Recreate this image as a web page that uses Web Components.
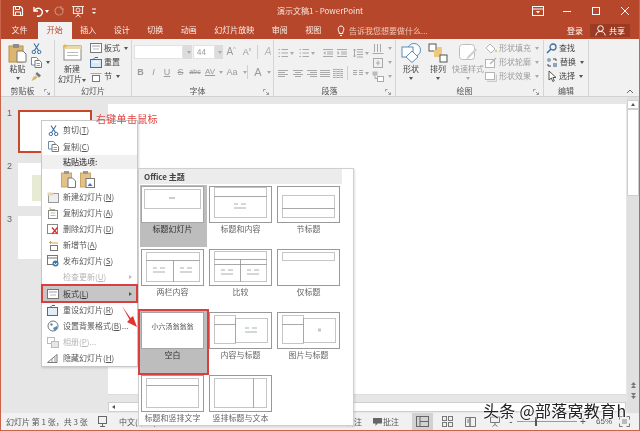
<!DOCTYPE html>
<html lang="zh">
<head>
<meta charset="utf-8">
<title>PowerPoint</title>
<style>
html, body { margin: 0; padding: 0; background: #fff; }
body { font: 8px/10px "Noto Sans CJK SC", "Liberation Sans", sans-serif; color: #444; }
</style>
</head>
<body>
<ppt-window></ppt-window>
<script>
// ── icons ─────────────────────────────────────────────
const svg = (w, h, inner, vb) =>
    `<svg width="${w}" height="${h}" viewBox="${vb || `0 0 ${w} ${h}`}" fill="none" style="display:block;flex:none">${inner}</svg>`;

const lines = (ys, x1, x2, c) => ys.map(y => `<path d="M${x1} ${y}H${x2}" stroke="${c}"/>`).join('');
const G = '#a9a9a9';

const ICONS = {
    save: svg(12, 12, `<path d="M1.5 1.5h7l2 2v7h-9z" stroke="#fff" stroke-width="1.2"/><path d="M3.5 1.5v3h4v-3M3.5 10.5v-3.5h5v3.5" stroke="#fff"/>`),
    undo: svg(12, 12, `<path d="M3 2v4h4" stroke="#fff" stroke-width="1.4"/><path d="M3.5 6a4 4 0 1 1 2.5 5" stroke="#fff" stroke-width="1.4"/>`),
    redo: svg(12, 12, `<circle cx="6" cy="6" r="4" stroke="#cf8a72" stroke-width="1.2"/><path d="M8 1v3h3" stroke="#cf8a72"/>`),
    present: svg(14, 13, `<path d="M1 1.5h12M2.5 1.5v7h9v-7" stroke="#f5e4dc" stroke-width="1.2"/><path d="M7 8.5v2M4.5 12l2.500-2 2.500 2" stroke="#f5e4dc"/><circle cx="7" cy="5" r="2" stroke="#f5e4dc"/>`),
    custom: svg(6, 8, `<path d="M1 2h4" stroke="#fff"/><path d="M1 5l2 2 2-2z" fill="#fff"/>`),
    ropt: svg(12, 10, `<rect x=".5" y=".5" width="11" height="9" stroke="#fff"/><path d="M.5 3h11" stroke="#fff"/><path d="M4 5h4L6 7.500z" fill="#fff"/>`),
    min: svg(10, 10, `<path d="M1 5.500h8" stroke="#fff"/>`),
    max: svg(10, 10, `<rect x="1.500" y="1.500" width="7" height="7" stroke="#fff"/>`),
    close: svg(10, 10, `<path d="M1 1l8 8M9 1l-8 8" stroke="#fff"/>`),
    bulb: svg(8, 11, `<path d="M2.200 7C.5 5 1 1 4 1s3.500 4 1.800 6v1.500H2.200z" stroke="#fff"/><path d="M3 10.500h2" stroke="#fff"/>`),
    user: svg(11, 11, `<circle cx="5.500" cy="3.500" r="2.800" stroke="#fff"/><path d="M.8 10.500c.5-3 2-4 4.700-4s4.200 1 4.700 4" stroke="#fff"/>`),

    paste: svg(20, 20, `<rect x="1" y="3" width="14" height="16" fill="#dcb66f" stroke="#b98f45"/><rect x="5" y="1" width="6" height="4" fill="#8d8d8d"/><path d="M9 8h6l3 3v8H9z" fill="#fff" stroke="#777"/>`),
    cut: svg(11, 11, `<path d="M3 .5l4.500 7M8 .5L3.500 7.500" stroke="#3d6f9f" stroke-width="1.100"/><circle cx="2.800" cy="9" r="1.700" stroke="#3d6f9f"/><circle cx="8.200" cy="9" r="1.700" stroke="#3d6f9f"/>`),
    copy: svg(11, 11, `<path d="M.5.5h5l1.500 1.500v6h-6.500z" fill="#fff" stroke="#6c8daa"/><path d="M4 3.500h4.500l2 2v5h-6.500z" fill="#fff" stroke="#777"/>${lines([6.5, 8.5], 5.5, 9, '#7aa0c0')}`),
    brush: svg(11, 11, `<path d="M6 1l4 3.500-2 2L4.500 3z" fill="#777"/><path d="M4.500 4.500L2 6.500l-1.500 3.500 4.500-2 1.500-2z" fill="#dcb66f"/>`),
    slide: svg(20, 18, `<rect x="2" y="3" width="17" height="14" fill="#fff" stroke="#888"/><rect x="2" y="3" width="17" height="3" fill="#e9d9a8"/>${lines([9.5, 12.5], 5, 16, '#bbb')}<path d="M3 .5l1 2 2 .5-2 .8-1 2-.8-2-2-.8 2-.5z" fill="#e5b64a"/>`),
    layout: svg(12, 10, `<rect x=".5" y=".5" width="11" height="9" fill="#fff" stroke="#777"/>${lines([3], 2, 10, '#99b')}${lines([6], 3, 9, '#bbb')}`),
    reset: svg(12, 11, `<rect x=".5" y="2.500" width="11" height="8" fill="#dbe8f3" stroke="#3d6f9f"/><path d="M3 2.500l2-2h3" stroke="#3d6f9f"/><path d="M3 5h6" stroke="#fff"/>`),
    section: svg(12, 11, `<path d="M.5 2.500h11" stroke="#dc9f4b"/><rect x="2.500" y="4.500" width="7" height="6" fill="#fff" stroke="#777"/>`),

    bullets: svg(10, 10, lines([1.500, 5, 8.500], 3.500, 10, G) + `<path d="M.5 1.500h1.500M.5 5h1.500M.5 8.500h1.500" stroke="${G}"/>`),
    indentL: svg(10, 10, lines([1.500, 8.500], 0, 10, G) + lines([4, 6], 4, 10, G) + `<path d="M2.500 3L.5 5l2 2z" fill="${G}"/>`),
    indentR: svg(10, 10, lines([1.500, 8.500], 0, 10, G) + lines([4, 6], 4, 10, G) + `<path d="M.5 3l2 2-2 2z" fill="${G}"/>`),
    spacing: svg(10, 10, lines([1.500, 4, 6.500, 9], 4, 10, G) + `<path d="M1.500 1v8M.2 2.500l1.300-1.500 1.300 1.500M.2 7.500l1.300 1.500 1.300-1.500" stroke="${G}"/>`),
    alignL: svg(10, 10, lines([2.500, 6.500], 0, 10, G) + lines([4.500, 8.500], 0, 7, G)),
    alignC: svg(10, 10, lines([2.500, 6.500], 0, 10, G) + lines([4.500, 8.500], 2, 8, G)),
    alignR: svg(10, 10, lines([2.500, 6.500], 0, 10, G) + lines([4.500, 8.500], 3, 10, G)),
    justify: svg(10, 10, lines([2.500, 4.500, 6.500, 8.500], 0, 10, G)),
    dist: svg(10, 10, lines([1.500, 3.500, 5.500, 7.500, 9.500], 0, 10, G) + `<path d="M3 0v10M7 0v10" stroke="#ddd"/>`),
    cols: svg(10, 10, lines([2.500, 4.500, 6.500], 0, 4, G) + lines([2.500, 4.500, 6.500], 6, 10, G)),
    dir: svg(12, 11, `<path d="M2.500 1v8M5.500 1v8M8.500 1v8" stroke="${G}"/><path d="M.5 10.500h11" stroke="#8fb1cc"/>`),
    valign: svg(12, 11, `<rect x="1.500" y="1.500" width="9" height="9" stroke="${G}"/><path d="M4 6h4M6 3.500v5" stroke="${G}"/>`),
    smart: svg(12, 11, `<rect x=".5" y=".5" width="5" height="4" fill="#bbb"/><rect x="5.500" y="5.500" width="6" height="5" fill="#fff" stroke="${G}"/><path d="M3 4.500v3h2.500" stroke="${G}"/>`),

    shapes: svg(20, 20, `<circle cx="13" cy="7" r="6.500" fill="#fff" stroke="#5a8cb6"/><rect x="1" y="4" width="11" height="10" fill="#fff" stroke="#5a8cb6"/><path d="M11 8l6 6-6 5.500-6-5.500z" fill="#fff" stroke="#5a8cb6"/>`),
    arrange: svg(20, 20, `<rect x="1" y="1" width="7" height="7" fill="#fff" stroke="#555"/><rect x="6" y="7" width="8" height="7" fill="#edc97e"/><rect x="9" y="4" width="5" height="5" fill="#edc97e"/><rect x="12" y="12" width="7" height="7" fill="#fff" stroke="#555"/>`),
    quick: svg(20, 20, `<rect x="1.500" y="1.500" width="15" height="15" rx="3" fill="#fff" stroke="#bdbdbd"/><path d="M19 7l-8 8-3 2 1.500-3.500 8-8z" fill="#d0d0d0"/>`),
    fill: svg(12, 11, `<path d="M5 1l5 5-4 4-5-5z" fill="#fff" stroke="#b5b5b5"/><path d="M11 7v2" stroke="#e0c68f" stroke-width="2"/>`),
    outline: svg(12, 11, `<rect x=".5" y="2.500" width="9" height="8" fill="#fff" stroke="#b5b5b5"/><path d="M11 1L5 7" stroke="#b5b5b5" stroke-width="1.400"/>`),
    effect: svg(12, 11, `<rect x=".5" y="1.500" width="9" height="7" fill="#fff" stroke="#b5b5b5"/><path d="M2 10.500h9.500v-7" stroke="#ccc" stroke-width="1.400"/>`),
    find: svg(11, 11, `<circle cx="7" cy="4" r="3" stroke="#3d6f9f" stroke-width="1.300"/><path d="M5 6l-4 4" stroke="#3d6f9f" stroke-width="1.600"/>`),
    replace: svg(12, 11, `<circle cx="3" cy="3" r="2" fill="#8aa5bd"/><rect x="7" y="6" width="4" height="4" fill="#8aa5bd"/><path d="M7 2h3v2M5 9H2V7" stroke="#444"/>`),
    select: svg(11, 12, `<path d="M3 1v9l2.300-2 1.500 3.500 1.500-.7L6.800 7.500H10z" fill="#fff" stroke="#555"/>`),
    launch: svg(6, 6, `<path d="M.5 2.500V.5h2M3 3l2.500 2.500M5.500 3.500v2h-2" stroke="#999"/>`),

    mNew: svg(12, 11, `<rect x="1.500" y="1.500" width="10" height="9" fill="#eee" stroke="#999"/><rect x=".5" y=".5" width="6" height="3" fill="#e2d5b0"/>`),
    mDup: svg(12, 12, `<path d="M3 .5v2h5" stroke="#dc9f4b"/><rect x="1.500" y="3.500" width="9" height="8" fill="#fff" stroke="#888"/>${lines([6, 8.500], 3.500, 8.500, '#bbb')}`),
    mDel: svg(12, 11, `<rect x=".5" y=".5" width="10" height="9" fill="#fff" stroke="#888"/><path d="M5 3.500l5.500 6.500M10.500 3.500L5 10" stroke="#d33" stroke-width="1.400"/>`),
    mSec: svg(12, 11, `<path d="M3.500 1v3M2 2.500h3" stroke="#dc9f4b"/><path d="M5 3h6" stroke="#dc9f4b"/><rect x="3.500" y="5.500" width="7" height="5" fill="#fff" stroke="#777"/>`),
    mPub: svg(12, 12, `<rect x=".5" y=".5" width="10" height="9" fill="#fff" stroke="#777"/><path d="M.5 3h10" stroke="#777"/><circle cx="8.500" cy="8.500" r="3" fill="#3d78ad"/><path d="M7 8l1.500 2 1.500-2" stroke="#fff"/>`),
    mReset: svg(12, 11, `<rect x=".5" y="2.500" width="10" height="8" fill="#e3edf5" stroke="#3d6f9f"/><path d="M3 2.500l2-2h3" stroke="#3d6f9f"/>`),
    mBg: svg(12, 12, `<circle cx="6" cy="6" r="5" fill="#fff" stroke="#777"/><circle cx="4.500" cy="4.500" r="1.200" fill="#5a8cb6"/><path d="M6 8l4-2v3.500L7.500 11z" fill="#5a8cb6"/>`),
    mPhoto: svg(12, 11, `<rect x=".5" y=".5" width="7" height="6" fill="#fff" stroke="#bbb"/><rect x="4.500" y="4.500" width="7" height="6" fill="#e6e6e6" stroke="#bbb"/>`),
    mHide: svg(12, 10, `<path d="M.5 9.500L10 1.500V9.500z" fill="#fff" stroke="#777"/><path d="M5 9V6M8 9V4" stroke="#999"/>`),
    pasteA: svg(15, 18, `<rect x=".5" y="3" width="10" height="14" fill="#e3c288" stroke="#c9a767"/><rect x="3" y="1" width="5" height="3" fill="#999"/><path d="M7 8h4.500l3 3v6.500H7z" fill="#fff" stroke="#777"/>`),
    pasteB: svg(15, 18, `<rect x=".5" y="3" width="10" height="14" fill="#e3c288" stroke="#c9a767"/><rect x="3" y="1" width="5" height="3" fill="#999"/><rect x="6" y="8.500" width="8.500" height="9" fill="#fff" stroke="#777"/><path d="M7.500 16l2.500-3 2.500 3z" fill="#3d78ad"/>`),

    notes: svg(11, 11, `<rect x="1.500" y=".5" width="8" height="7" stroke="#666"/><path d="M5.500 7.500v3M3 10.500h5" stroke="#666"/>`),
    comment: svg(9, 8, `<path d="M0 0h9v5.500H4.500L2.500 8V5.500H0z" fill="#666"/>`),
    normal: svg(13, 11, `<rect x=".5" y=".5" width="12" height="10" stroke="#666"/><path d="M4 .5v10M4 5.500h8.500" stroke="#666"/>`),
    sorter: svg(11, 11, `<rect x=".5" y=".5" width="4" height="4" stroke="#777"/><rect x="6.500" y=".5" width="4" height="4" stroke="#777"/><rect x=".5" y="6.500" width="4" height="4" stroke="#777"/><rect x="6.500" y="6.500" width="4" height="4" stroke="#777"/>`),
    reader: svg(11, 11, `<path d="M.5 1.500h4.500v9H.5zM5 1.500h5.500v9H5z" stroke="#777"/><path d="M2 4h2M2 6h2" stroke="#777"/>`),
    show: svg(12, 11, `<path d="M.5 1h11M1.500 1v5.500h9V1" stroke="#777"/><path d="M6 6.500v2M3.500 10.500L6 8.500l2.500 2" stroke="#777"/>`),
    fit: svg(11, 11, `<path d="M.5 3.500v-3h3M7.500.5h3v3M10.500 7.500v3h-3M3.500 10.500h-3v-3" stroke="#777"/><rect x="3" y="3" width="5" height="5" fill="#bbb"/>`),
};

// ── elements ──────────────────────────────────────────
class PptTitlebar extends HTMLElement {
    connectedCallback() {
        this.attachShadow({ mode: 'open' }).innerHTML = `
<style>
:host { display: grid; grid-template-columns: 1fr auto 1fr; align-items: center; height: 22px; background: #b7472a; color: #fff; }
.qat { display: flex; align-items: center; padding-left: 11px; }
.qat span { display: block; }
.caret { width: 0; height: 0; border: 2px solid transparent; border-top: 3px solid #fff; border-bottom: 0; margin: 0 4px 0 2px; }
.title { font-size: 8px; line-height: 10px; color: #f7e6df; }
.ctl { display: flex; justify-content: flex-end; }
.ctl span { width: 29px; display: flex; justify-content: center; }
</style>
<div class="qat">
    <span style="margin-right:7px">${ICONS.save}</span>
    <span>${ICONS.undo}</span><i class="caret"></i>
    <span style="margin-right:6px">${ICONS.redo}</span>
    <span style="margin-right:6px">${ICONS.present}</span>
    <span>${ICONS.custom}</span>
</div>
<div class="title">演示文稿1 - PowerPoint</div>
<div class="ctl"><span>${ICONS.ropt}</span><span>${ICONS.min}</span><span>${ICONS.max}</span><span>${ICONS.close}</span></div>`;
    }
}

class PptTabs extends HTMLElement {
    connectedCallback() {
        const tabs = ['开始', '插入', '设计', '切换', '动画', '幻灯片放映', '审阅', '视图'];
        this.attachShadow({ mode: 'open' }).innerHTML = `
<style>
:host { display: flex; align-items: stretch; height: 17px; background: #b7472a; color: #fff; font-size: 8px; line-height: 16px; }
.tab { padding: 0 8.750px; color: #fbeee9; }
.file { width: 37px; box-sizing: border-box; text-align: center; padding: 0; }
.on { background: #f1f1f1; color: #b7472a; }
.tell { display: flex; align-items: center; gap: 4px; margin-left: 7px; color: #f2c9ba; }
.right { margin-left: auto; display: flex; align-items: center; gap: 7px; padding-right: 9px; }
.share { display: flex; align-items: center; gap: 3px; height: 13px; padding: 0 5px; background: #9b3b23; line-height: 13px; margin-top: -1px; }
</style>
<div class="tab file">文件</div>
${tabs.map((t, i) => `<div class="tab${i === 0 ? ' on' : ''}">${t}</div>`).join('')}
<div class="tell">${ICONS.bulb}<span>告诉我您想要做什么...</span></div>
<div class="right"><span>登录</span><span class="share">${ICONS.user}共享</span></div>`;
    }
}

class RbGroup extends HTMLElement {
    connectedCallback() {
        const launcher = this.hasAttribute('launcher');
        this.attachShadow({ mode: 'open' }).innerHTML = `
<style>
:host { display: flex; flex-direction: column; box-sizing: border-box; height: 56px; flex: none; border-right: 1px solid #d5d5d5; margin-top: 1px; }
.body { flex: 1; display: flex; min-height: 0; }
.foot { display: grid; grid-template-columns: ${launcher ? '1fr 10px' : '1fr'}; height: 10px; line-height: 10px; align-items: center; color: #555; text-align: center; }
.foot svg { margin-top: 2px; }
</style>
<div class="body"><slot></slot></div>
<div class="foot"><span>${this.getAttribute('label')}</span>${launcher ? ICONS.launch : ''}</div>`;
    }
}

class PptRibbon extends HTMLElement {
    connectedCallback() {
        const caret = '<i class="caret"></i>';
        const big = (icon, text, w, extra = '') =>
            `<div class="big ${extra}" style="width:${w}px"><span class="ic">${icon}</span><span>${text}</span>${caret}</div>`;
        const item = (icon, text, c = false) =>
            `<div class="item">${icon}<span>${text}</span>${c ? caret : ''}</div>`;
        const ic = (name, ml, c) =>
            `<span style="margin-left:${ml}px">${ICONS[name]}</span>${c ? caret : ''}`;

        this.attachShadow({ mode: 'open' }).innerHTML = `
<style>
:host { display: flex; height: 58px; background: #f1f1f1; border-bottom: 1px solid #d2d2d2; box-sizing: border-box; font-size: 8px; line-height: 10px; color: #444; position: relative; }
.big { display: flex; flex-direction: column; align-items: center; flex: none; text-align: center; }
.big .ic { height: 20px; margin: 3px 0 1px; }
.big .caret { margin: 3px auto 0; }
.off, .off * { color: #9d9d9d; }
.list { display: flex; flex-direction: column; padding-top: 1px; flex: none; }
.item { display: flex; align-items: center; gap: 2px; height: 14px; }
.off .caret, .caret.off { border-top-color: #aaa; }
.caret { display: block; width: 0; height: 0; border: 2px solid transparent; border-top: 3px solid #555; border-bottom: 0; flex: none; margin-left: 2px; }
.rows { display: flex; flex-direction: column; gap: 6px; padding-top: 5px; }
.row { display: flex; align-items: center; height: 14px; color: #9a9a9a; }
.row .caret { border-top-color: #aaa; }
.box { height: 14px; background: #fff; border: 1px solid #e2e2e2; box-sizing: border-box; line-height: 12px; padding-left: 3px; }
.spin { height: 14px; width: 9px; background: #dcdcdc; display: flex; align-items: center; justify-content: center; }
.t { font-family: "Liberation Sans", sans-serif; text-align: center; flex: none; }
.sep { width: 1px; height: 14px; background: #d0d0d0; }
.chev { position: absolute; right: 5px; bottom: 2px; }
</style>
<rb-group label="剪贴板" launcher style="width:54px">
    <div style="display:flex">
        <div style="margin-left:3px">${big(ICONS.paste, '粘贴', 27)}</div>
        <div class="list">
            ${item(ICONS.cut, '')}
            <div class="item">${ICONS.copy}${caret}</div>
            ${item(ICONS.brush, '')}
        </div>
    </div>
</rb-group>
<rb-group label="幻灯片" style="width:77px">
    <div style="display:flex">
        <div class="big" style="width:32px;margin-left:1px">
            <span class="ic" style="height:18px;margin-bottom:3px">${ICONS.slide}</span>
            <span>新建</span>
            <span style="display:flex;align-items:center;white-space:nowrap">幻灯片${caret}</span>
        </div>
        <div class="list" style="margin-left:2px">
            ${item(ICONS.layout, '板式', true)}
            ${item(ICONS.reset, '重置')}
            ${item(ICONS.section, '节', true)}
        </div>
    </div>
</rb-group>
<rb-group label="字体" launcher style="width:142px">
    <div class="rows" style="padding-left:2px">
        <div class="row">
            <div class="box" style="width:49px"></div><div class="spin">${caret}</div>
            <div class="box" style="width:22px;margin-left:1px">44</div><div class="spin" style="width:8px">${caret}</div>
            <span class="t" style="width:14px;margin-left:1px;font-size:10px">A<sup style="font-size:5px;line-height:0">^</sup></span>
            <span class="t" style="width:14px;margin-left:2px;font-size:9px">A<sup style="font-size:5px;line-height:0">v</sup></span>
            <span class="sep" style="margin-left:3px"></span>
            <span class="t" style="width:14px;margin-left:3px;font-size:10px;font-style:italic;color:#b8b8b8">A</span>
        </div>
        <div class="row">
            <span class="t" style="width:13px;font-weight:700;font-size:9px">B</span>
            <span class="t" style="width:13px;font-style:italic;font-size:9px">I</span>
            <span class="t" style="width:14px;text-decoration:underline;font-size:9px">U</span>
            <span class="t" style="width:13px;text-decoration:line-through;font-size:9px">S</span>
            <span class="t" style="width:16px;text-decoration:line-through;font-size:7px">abc</span>
            <span class="t" style="width:14px;font-size:8px;text-decoration:underline">AV</span>${caret}
            <span class="t" style="width:18px;font-size:9px">Aa</span>${caret}
            <span class="sep" style="margin-left:0"></span>
            <span class="t" style="width:14px;margin-left:3px;font-size:11px">A</span>${caret}
        </div>
    </div>
</rb-group>
<rb-group label="段落" launcher style="width:122px">
    <div class="rows" style="padding-left:4px;width:94px;padding-top:8px;gap:10px">
        <div class="row" style="height:10px">
            ${ic('bullets', 0, 1)}${ic('bullets', 5, 1)}${ic('indentL', 8)}${ic('indentR', 4)}${ic('spacing', 6, 1)}
        </div>
        <div class="row" style="height:10px">
            ${ic('alignL', 0)}${ic('alignC', 5)}${ic('alignR', 4)}${ic('justify', 3)}${ic('dist', 3)}
            <span class="sep" style="margin-left:4px"></span>${ic('cols', 5, 1)}
        </div>
    </div>
    <div class="list off">
        <div class="item">${ICONS.dir}${caret}</div>
        <div class="item">${ICONS.valign}${caret}</div>
        <div class="item">${ICONS.smart}${caret}</div>
    </div>
</rb-group>
<rb-group label="绘图" launcher style="width:148px">
    <div style="display:flex">
        <div style="margin-left:1px">${big(ICONS.shapes, '形状', 28)}</div>
        ${big(ICONS.arrange, '排列', 26)}
        ${big(ICONS.quick, '<span style="white-space:nowrap">快速样式</span>', 34, 'off')}
        <div class="list off">
            ${item(ICONS.fill, '形状填充', true)}
            ${item(ICONS.outline, '形状轮廓', true)}
            ${item(ICONS.effect, '形状效果', true)}
        </div>
    </div>
</rb-group>
<rb-group label="编辑" style="width:45px">
    <div class="list" style="padding-left:2px">
        ${item(ICONS.find, '查找')}
        ${item(ICONS.replace, '替换', true)}
        ${item(ICONS.select, '选择', true)}
    </div>
</rb-group>
<span class="chev">${svg(8, 5, '<path d="M1 4l3-3 3 3" stroke="#666"/>')}</span>`;
    }
}

class SlideThumb extends HTMLElement {
    connectedCallback() {
        const on = this.hasAttribute('active');
        this.attachShadow({ mode: 'open' }).innerHTML = `
<style>
:host { display: flex; height: 43px; padding-left: 6px; gap: 6px; font: 9px/6px "Liberation Sans", sans-serif; color: ${on ? '#b7472a' : '#666'}; }
.n { width: 5px; text-align: right; }
.s { width: 74px; height: 43px; box-sizing: border-box; background: #fff; ${on ? 'border: 2px solid #c8472b;' : ''} padding: 12px 0 0 14px; }
</style>
<div class="n">${this.getAttribute('n')}</div>
<div class="s"><slot></slot></div>`;
    }
}

class PptSlides extends HTMLElement {
    connectedCallback() {
        this.attachShadow({ mode: 'open' }).innerHTML = `
<style>
:host { display: flex; flex-direction: column; gap: 10px; width: 106px; flex: none; padding-top: 13px; box-sizing: border-box; background: #e6e6e6; }
.pic { width: 10px; height: 26px; background: #e8ebd3; }
</style>
<slide-thumb n="1" active></slide-thumb>
<slide-thumb n="2"><div class="pic"></div></slide-thumb>
<slide-thumb n="3"></slide-thumb>`;
    }
}

class PptEditor extends HTMLElement {
    connectedCallback() {
        this.attachShadow({ mode: 'open' }).innerHTML = `
<style>
:host { flex: 1; display: flex; min-width: 0; background: #e6e6e6; }
.main { flex: 1; display: flex; flex-direction: column; padding: 7px 0 1px 1px; }
.canvas { flex: 1; background: #fff; border-bottom: 1px solid #dcdcdc; }
.hbar { height: 10px; margin-top: 7px; background: #fff; border: 1px solid #cfcfcf; box-sizing: border-box; display: flex; align-items: center; padding-left: 3px; }
.tri { width: 0; height: 0; border: 2.500px solid transparent; border-right: 3px solid #555; border-left: 0; }
.v { width: 12px; flex: none; margin-left: 1px; display: flex; flex-direction: column; background: #e0e0e0; }
.up { height: 9px; background: #fff; border: 1px solid #cfcfcf; box-sizing: border-box; display: flex; justify-content: center; align-items: center; margin-top: 3px; }
.up i { width: 0; height: 0; border: 2.500px solid transparent; border-bottom: 3px solid #555; border-top: 0; }
.thumb { height: 87px; background: #fff; border: 1px solid #cfcfcf; box-sizing: border-box; }
.pg { margin-top: auto; padding-bottom: 14px; display: flex; flex-direction: column; align-items: center; gap: 5px; }
</style>
<div class="main">
    <div class="canvas"></div>
    <div class="hbar"><i class="tri"></i></div>
</div>
<div class="v">
    <div class="up"><i></i></div>
    <div class="thumb"></div>
    <div class="pg">${svg(5, 6, '<path d="M2.500 0L5 3H0zM2.500 3L5 6H0z" fill="#777"/>')}${svg(5, 6, '<path d="M0 0h5L2.500 3zM0 3h5L2.500 6z" fill="#777"/>')}</div>
</div>`;
    }
}

class PptStatus extends HTMLElement {
    connectedCallback() {
        this.attachShadow({ mode: 'open' }).innerHTML = `
<style>
:host { display: flex; align-items: center; height: 17px; background: #f1f1f1; font-size: 8px; line-height: 10px; color: #555; padding-left: 5px; }
.view { display: flex; align-items: center; justify-content: center; height: 17px; width: 21px; flex: none; }
.slider { position: relative; width: 60px; height: 1px; background: #999; margin: 0 2px; flex: none; }
.slider i { position: absolute; left: 18px; top: -4px; width: 2px; height: 9px; background: #555; }
.pm { font: 10px/10px "Liberation Sans", sans-serif; width: 8px; text-align: center; flex: none; }
</style>
<span style="width:88px;white-space:nowrap;flex:none">幻灯片 第 1 张，共 3 张</span>
<span style="margin-left:3px">${ICONS.notes}</span>
<span style="margin-left:11px;width:60px;flex:none;white-space:nowrap">中文(中国)</span>
<span style="margin-left:167px;width:22px;flex:none;white-space:nowrap">备注</span>
<span style="margin-left:5px;display:flex;align-items:center;gap:1px;width:39px;flex:none;white-space:nowrap">${ICONS.comment}批注</span>
<span class="view" style="background:#d2d2d2">${ICONS.normal}</span>
<span class="view" style="margin-left:4px">${ICONS.sorter}</span>
<span class="view" style="margin-left:2px">${ICONS.reader}</span>
<span class="view" style="margin-left:3px">${ICONS.show}</span>
<span class="pm" style="margin-left:2px">-</span><span class="slider"><i></i></span><span class="pm">+</span>
<span style="margin-left:9px;font-family:'Liberation Sans',sans-serif;width:20px;flex:none">65%</span>
<span style="margin-left:3px">${ICONS.fit}</span>`;
    }
}

class MenuItem extends HTMLElement {
    connectedCallback() {
        const off = this.hasAttribute('disabled');
        const hl = this.hasAttribute('hl');
        const more = this.hasAttribute('more');
        const h = this.getAttribute('h') || 16;
        this.attachShadow({ mode: 'open' }).innerHTML = `
<style>
:host { display: flex; align-items: center; height: ${h}px; color: ${off ? '#b5b5b5' : hl ? '#333' : '#555'}; ${hl ? 'background:#c6c6c6;outline:2px solid #d8403f;outline-offset:-1px;' : ''} }
.i { width: 21px; flex: none; display: flex; justify-content: center; padding-left: 1px; box-sizing: border-box; }
.m { margin-left: auto; margin-right: 5px; width: 0; height: 0; border: 2.500px solid transparent; border-left: 3px solid ${off ? '#bbb' : '#555'}; border-right: 0; }
::slotted(u) { text-underline-offset: 1px; }
</style>
<span class="i">${ICONS[this.getAttribute('icon')] || ''}</span><span><slot></slot></span>${more ? '<i class="m"></i>' : ''}`;
    }
}

class PptMenu extends HTMLElement {
    connectedCallback() {
        this.attachShadow({ mode: 'open' }).innerHTML = `
<style>
:host { position: absolute; left: 40px; top: 120px; width: 97px; height: 247px; box-sizing: border-box; padding: 1px 0 0; background: #fff; border: 1px solid #c8c8c8; box-shadow: 1px 1px 2px rgba(0,0,0,.15); font-size: 8px; line-height: 10px; white-space: nowrap; }
.head { margin-top: 1px; background: #f0f0f0; height: 14px; line-height: 14px; padding-left: 21px; font-weight: 500; color: #444; margin-left: 0; }
.paste { display: flex; gap: 4px; height: 20px; padding: 1px 0 0 19px; box-sizing: border-box; }
</style>
<menu-item icon="cut">剪切(<u>T</u>)</menu-item>
<menu-item icon="copy" h="17">复制(<u>C</u>)</menu-item>
<div class="head" style="margin-top:0">粘贴选项:</div>
<div class="paste">${ICONS.pasteA}${ICONS.pasteB}</div>
<menu-item icon="mNew">新建幻灯片(<u>N</u>)</menu-item>
<menu-item icon="mDup">复制幻灯片(<u>A</u>)</menu-item>
<menu-item icon="mDel">删除幻灯片(<u>D</u>)</menu-item>
<menu-item icon="mSec">新增节(<u>A</u>)</menu-item>
<menu-item icon="mPub">发布幻灯片(<u>S</u>)</menu-item>
<menu-item disabled more>检查更新(<u>U</u>)</menu-item>
<menu-item icon="layout" hl more h="17">板式(<u>L</u>)</menu-item>
<menu-item icon="mReset">重设幻灯片(<u>R</u>)</menu-item>
<menu-item icon="mBg">设置背景格式(<u>B</u>)...</menu-item>
<menu-item icon="mPhoto" disabled>相册(<u>P</u>)...</menu-item>
<menu-item icon="mHide">隐藏幻灯片(<u>H</u>)</menu-item>`;
    }
}

const dotted = (x1, y1, x2, y2) =>
    `<rect x="${x1 + .5}" y="${y1 + .5}" width="${x2 - x1}" height="${y2 - y1}" stroke="#8a8a8a" stroke-dasharray="1 1"/>`;
const holder = (cx, cy) =>
    `<path d="M${cx - 6} ${cy - 2}h4M${cx - 6} ${cy + 2}h12M${cx + 1} ${cy - 2}h5" stroke="#c4cbce" stroke-width="1.500"/>`;

const LAYOUTS = {
    title: dotted(3, 3, 59, 22) + `<path d="M28 12h6" stroke="#ccc" stroke-width="2"/>`,
    content: dotted(5, 1, 57, 10) + dotted(5, 10, 57, 31) + holder(31, 20),
    section: dotted(5, 9, 57, 22) + dotted(5, 22, 57, 31),
    two: dotted(5, 3, 58, 11) + dotted(5, 11, 32, 32) + dotted(32, 11, 58, 32) + holder(18, 21) + holder(45, 21),
    compare: dotted(5, 2, 57, 10) + dotted(5, 10, 31, 15) + dotted(31, 10, 57, 15) + dotted(5, 15, 31, 32) + dotted(31, 15, 57, 32) + holder(18, 23) + holder(44, 23),
    only: dotted(5, 3, 57, 11),
    blank: '',
    capContent: dotted(5, 3, 26, 12) + dotted(5, 12, 26, 31) + dotted(26, 6, 58, 30) + holder(42, 18),
    capPic: dotted(5, 3, 26, 12) + dotted(5, 12, 26, 31) + dotted(26, 6, 58, 30) + `<path d="M41 18h3" stroke="#c5c5c5" stroke-width="3"/>`,
    vText: dotted(5, 3, 57, 10) + dotted(5, 10, 57, 32),
    vTitle: dotted(5, 3, 44, 32) + dotted(44, 3, 57, 32),
};

class LayoutCell extends HTMLElement {
    connectedCallback() {
        const on = this.hasAttribute('selected');
        const boxed = this.hasAttribute('boxed');
        const scrib = this.getAttribute('scribble');
        this.attachShadow({ mode: 'open' }).innerHTML = `
<style>
:host { display: block; width: 67px; height: 62px; box-sizing: border-box; padding: 1px 0 0 1px; text-align: center; ${on ? 'background: #bdbdbd;' : ''} ${boxed ? 'outline: 2px solid #d8403f; outline-offset: 0;' : ''} color: ${on ? '#333' : '#666'}; position: relative; }
.t { width: 63px; height: 37px; background: #fff; border: 1px solid ${on ? '#a5a5a5' : '#999'}; box-sizing: border-box; position: relative; display: flex; align-items: center; justify-content: center; font-size: 7px; color: #555; overflow: hidden; white-space: nowrap; }
.t svg { position: absolute; left: -1px; top: -1px; }
.l { width: 63px; line-height: 10px; margin-top: 1px; white-space: nowrap; }
</style>
<div class="t">${svg(63, 37, LAYOUTS[this.getAttribute('type')])}${scrib ? `<span style="margin-top:-9px">${scrib}</span>` : ''}</div>
<div class="l"><slot></slot></div>`;
    }
}

class LayoutGallery extends HTMLElement {
    connectedCallback() {
        this.attachShadow({ mode: 'open' }).innerHTML = `
<style>
:host { position: absolute; left: 137px; top: 168px; width: 216px; height: 258px; box-sizing: border-box; background: #fff; border: 1px solid #cfcfcf; box-shadow: 1px 1px 2px rgba(0,0,0,.12); padding-right: 11px; font-size: 8px; line-height: 10px; }
.head { height: 15px; line-height: 15px; background: #ececec; padding-left: 5px; font-weight: 700; color: #444; font-size: 8px; }
.grid { display: grid; grid-template-columns: repeat(3, 68px); grid-auto-rows: 63px; padding: 1px 0 0 1px; }
</style>
<div class="head">Office 主题</div>
<div class="grid">
    <layout-cell type="title" selected>标题幻灯片</layout-cell>
    <layout-cell type="content">标题和内容</layout-cell>
    <layout-cell type="section">节标题</layout-cell>
    <layout-cell type="two">两栏内容</layout-cell>
    <layout-cell type="compare">比较</layout-cell>
    <layout-cell type="only">仅标题</layout-cell>
    <layout-cell type="blank" selected boxed scribble="小六汤翁翁翁">空白</layout-cell>
    <layout-cell type="capContent">内容与标题</layout-cell>
    <layout-cell type="capPic">图片与标题</layout-cell>
    <layout-cell type="vText">标题和竖排文字</layout-cell>
    <layout-cell type="vTitle">竖排标题与文本</layout-cell>
</div>`;
    }
}

class PptWindow extends HTMLElement {
    connectedCallback() {
        this.attachShadow({ mode: 'open' }).innerHTML = `
<style>
:host { display: flex; flex-direction: column; position: relative; width: 640px; height: 431px; box-sizing: border-box; overflow: hidden; border: 1px solid #c9634b; border-top: 0; background: #e6e6e6; filter: blur(.35px); }
.mid { flex: 1; display: flex; min-height: 0; }
.note { position: absolute; left: 95px; top: 112px; color: #e2433f; font-size: 10px; line-height: 13px; letter-spacing: .3px; white-space: nowrap; }
.arrow { position: absolute; left: 119px; top: 304px; }
.mark { position: absolute; left: 482px; top: 400px; font-size: 16px; line-height: 20px; letter-spacing: .3px; color: #222; white-space: nowrap; text-shadow: 0 0 2px #fff, 0 0 2px #fff, 0 0 3px #fff; }
</style>
<ppt-titlebar></ppt-titlebar>
<ppt-tabs></ppt-tabs>
<ppt-ribbon></ppt-ribbon>
<div class="mid"><ppt-slides></ppt-slides><ppt-editor></ppt-editor></div>
<ppt-status></ppt-status>
<ppt-menu></ppt-menu>
<layout-gallery></layout-gallery>
<span class="note">右键单击鼠标</span>
<span class="arrow">${svg(19, 25, '<path d="M2 2l8.500 12 2.500-2 4 11-10-5 2.500-2.500z" fill="#e3352f"/>')}</span>
<span class="mark">头条 @部落窝教育h</span>`;
    }
}

customElements.define('rb-group', RbGroup);
customElements.define('slide-thumb', SlideThumb);
customElements.define('menu-item', MenuItem);
customElements.define('layout-cell', LayoutCell);
customElements.define('ppt-titlebar', PptTitlebar);
customElements.define('ppt-tabs', PptTabs);
customElements.define('ppt-ribbon', PptRibbon);
customElements.define('ppt-slides', PptSlides);
customElements.define('ppt-editor', PptEditor);
customElements.define('ppt-status', PptStatus);
customElements.define('ppt-menu', PptMenu);
customElements.define('layout-gallery', LayoutGallery);
customElements.define('ppt-window', PptWindow);
</script>
</body>
</html>
